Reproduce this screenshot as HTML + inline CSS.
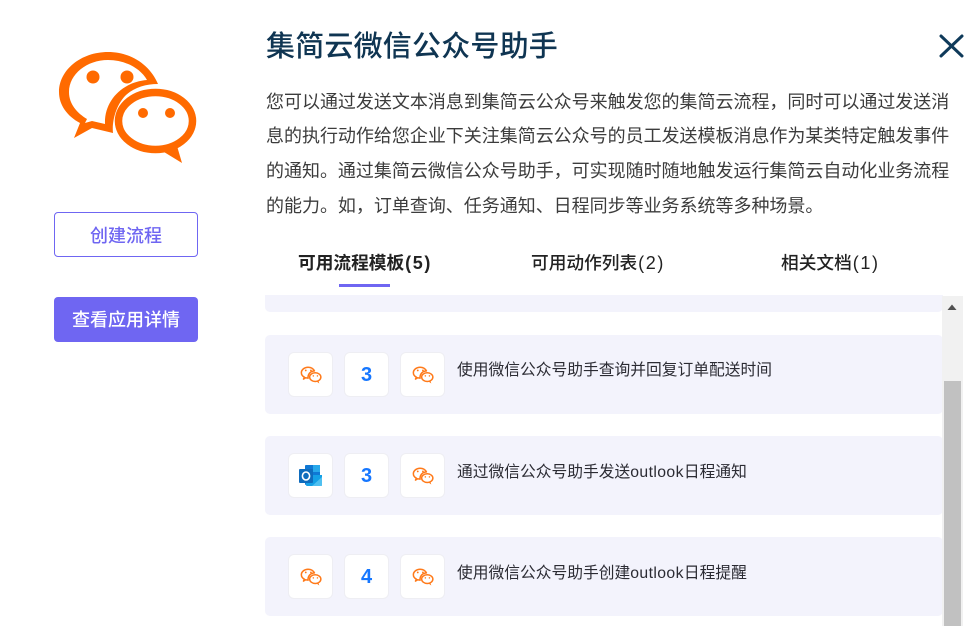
<!DOCTYPE html>
<html lang="zh">
<head>
<meta charset="utf-8">
<style>
html,body{margin:0;padding:0;background:#fff}
body{width:975px;height:626px;overflow:hidden;position:relative;font-family:"Liberation Sans","Noto Sans CJK SC",sans-serif}
.a{position:absolute;white-space:nowrap}
.title{left:266px;top:27px;font-size:29px;line-height:41px;font-weight:500;color:#0f3552;letter-spacing:.2px}
.p{left:266px;font-size:18px;line-height:35px;color:#3c3c3c;height:35px;letter-spacing:-.02px}
.btn{position:absolute;left:54px;width:144px;height:45px;box-sizing:border-box;border-radius:4px;text-align:center;font-size:18px;font-weight:500}
.b1{top:212px;border:1px solid #6f66f2;color:#6f66f2;line-height:46px}
.b2{top:297px;background:#6f66f2;color:#fff;line-height:46px}
.tab{top:251px;font-size:17.7px;line-height:24px;color:#222;font-weight:500}
.tab span{letter-spacing:1.6px;margin-left:1px;font-size:18px}
.card{position:absolute;left:265px;width:678px;height:79px;background:#f3f3fc;border-radius:5px}
.sq{position:absolute;top:17px;width:45px;height:45px;box-sizing:border-box;background:#fff;border:1px solid #eeeef3;border-radius:6px;text-align:center;font:bold 20px/45px "Liberation Sans",sans-serif;color:#1677ff}
.s1{left:23px}.s2{left:79px}.s3{left:135px}
.sq svg{position:absolute;left:11px;top:13px;width:22px;height:18px}
.t{position:absolute;left:192px;top:24px;font-size:15.75px;line-height:24px;color:#2b2b33;white-space:nowrap}
.t b{font-weight:400;letter-spacing:.4px}
</style>
</head>
<body>
<svg width="0" height="0" style="position:absolute">
<symbol id="wx" viewBox="55 48 145 118">
<path fill-rule="evenodd" d="M158 84C150 65 131 52 108 52C81 52 59 70 59 92C59 105 67 116 80 123L74 138L92 128L113 133C112 125 114 108 125 96C133 88 145 84 158 84ZM147 80C140 68 125 60 108 60C87 60 69 74 69 92C69 104 77 113 87 119L85 123L92 121L105 124C104 101 122 82 147 80Z"/>
<circle cx="93" cy="77" r="6.5"/><circle cx="127" cy="77" r="6.5"/>
<ellipse cx="155.5" cy="121" rx="37" ry="28.5" fill="none" stroke="currentColor" stroke-width="7.5"/>
<path d="M164 152L182 163L177 146Z"/>
<circle cx="143" cy="113" r="5"/><circle cx="170" cy="113" r="5"/>
</symbol>
<symbol id="wxs" viewBox="55 48 145 118">
<path fill="none" stroke="#ff7a1a" stroke-width="10" stroke-linejoin="round" d="M150 80C142 65 126 56 108 56C84 56 64 72 64 92C64 105 72 115 84 121L78 134L92 125L108 128C106 100 124 82 150 80Z"/>
<circle cx="93" cy="77" r="6" fill="#ff7a1a"/><circle cx="127" cy="77" r="6" fill="#ff7a1a"/>
<ellipse cx="155.5" cy="121" rx="37" ry="28.5" fill="#fff" stroke="#ff7a1a" stroke-width="10"/>
<path d="M164 150L182 163L177 146Z" fill="#ff7a1a"/>
<circle cx="143" cy="113" r="5" fill="#ff7a1a"/><circle cx="170" cy="113" r="5" fill="#ff7a1a"/>
</symbol>
</svg>

<svg class="a" style="left:55px;top:48px;width:145px;height:118px;color:#ff6a00;fill:#ff6a00"><use href="#wx"/></svg>

<div class="btn b1">创建流程</div>
<div class="btn b2">查看应用详情</div>

<div class="a title">集简云微信公众号助手</div>
<svg class="a" style="left:938px;top:33px" width="28" height="26"><path d="M3 3L24 23M24 3L3 23" stroke="#0f3a5a" stroke-width="3" stroke-linecap="round" fill="none"/></svg>

<div class="a p" style="top:85px">您可以通过发送文本消息到集简云公众号来触发您的集简云流程，同时可以通过发送消</div>
<div class="a p" style="top:119px">息的执行动作给您企业下关注集简云公众号的员工发送模板消息作为某类特定触发事件</div>
<div class="a p" style="top:154px">的通知。通过集简云微信公众号助手，可实现随时随地触发运行集简云自动化业务流程</div>
<div class="a p" style="top:189px">的能力。如，订单查询、任务通知、日程同步等业务系统等多种场景。</div>

<div class="a tab" style="left:298px;font-weight:700">可用流程模板<span>(5)</span></div>
<div class="a tab" style="left:531px">可用动作列表<span>(2)</span></div>
<div class="a tab" style="left:781px">相关文档<span>(1)</span></div>
<div class="a" style="left:339px;top:284px;width:51px;height:3px;background:#6f66f2"></div>

<div class="a" style="left:265px;top:295px;width:678px;height:17px;background:#f3f3fc;border-radius:0 0 5px 5px"></div>

<div class="card" style="top:335px">
<div class="sq s1"><svg><use href="#wxs"/></svg></div>
<div class="sq s2">3</div>
<div class="sq s3"><svg><use href="#wxs"/></svg></div>
<div class="t">使用微信公众号助手查询并回复订单配送时间</div>
</div>

<div class="card" style="top:436px">
<div class="sq s1">
<svg viewBox="0 0 23 21" style="left:10px;top:11px;width:23px;height:21px">
<rect x="6" y="0" width="15" height="20" rx="1" fill="#0f78d4"/>
<rect x="14" y="0" width="7" height="7" fill="#28a8ea"/>
<path d="M7 10L23 10V20a1 1 0 0 1-1 1H8a1 1 0 0 1-1-1Z" fill="#14a0e6"/>
<path d="M13 21L23 12V20a1 1 0 0 1-1 1Z" fill="#50c0f0"/>
<rect x="0" y="4" width="14" height="14" rx="1" fill="#0f6cbd"/>
<ellipse cx="7" cy="11" rx="3.6" ry="4" fill="none" stroke="#fff" stroke-width="1.6"/>
</svg>
</div>
<div class="sq s2">3</div>
<div class="sq s3"><svg><use href="#wxs"/></svg></div>
<div class="t" style="top:25px">通过微信公众号助手发送<b>outlook</b>日程通知</div>
</div>

<div class="card" style="top:537px">
<div class="sq s1"><svg><use href="#wxs"/></svg></div>
<div class="sq s2">4</div>
<div class="sq s3"><svg><use href="#wxs"/></svg></div>
<div class="t" style="top:25px">使用微信公众号助手创建<b>outlook</b>日程提醒</div>
</div>

<div class="a" style="left:942px;top:296px;width:21px;height:330px;background:#f1f1f1"></div>
<div class="a" style="left:944px;top:381px;width:17px;height:245px;background:#c1c1c1"></div>
<svg class="a" style="left:947px;top:304px" width="10" height="7"><path d="M5 0.5L9.5 6H0.5Z" fill="#505050"/></svg>
</body>
</html>
